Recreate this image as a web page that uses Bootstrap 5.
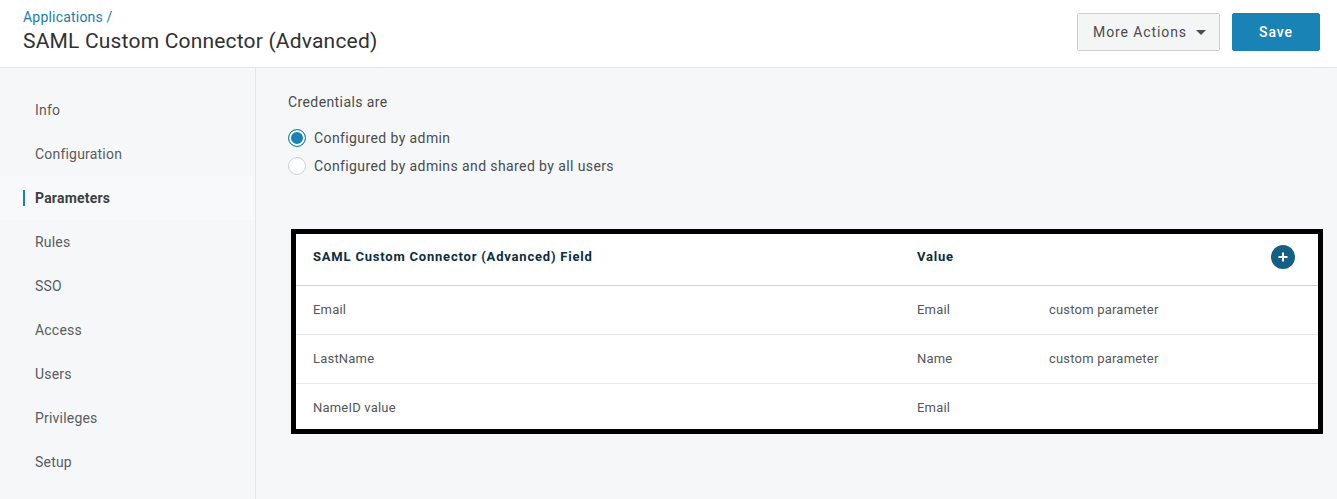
<!DOCTYPE html>
<html lang="en">
<head>
<meta charset="utf-8">
<title>SAML Custom Connector (Advanced)</title>
<link rel="stylesheet" href="https://cdn.jsdelivr.net/npm/bootstrap@5.3.0/dist/css/bootstrap.min.css">
<style>
html,body{height:499px;overflow:hidden}
body{background:#f5f7f9;font-family:Roboto,"Liberation Sans",sans-serif;color:#4a4c4e;font-size:14px;letter-spacing:.4px}
.top-head{height:68px;background:#fff;border-bottom:1px solid #e4e7ea;padding:0 17px 0 23px}
.crumb{font-size:14px;line-height:18px;color:#1a7ea8;text-decoration:none;display:block;padding-top:8px;letter-spacing:.2px}
.page-name{font-size:21px;line-height:30px;font-weight:400;color:#2f3133;margin:0;letter-spacing:.19px}
.act-bar{padding-top:13px}
.act-more{width:143px;height:38px;background:#f4f5f5;border:1px solid #ccc;border-radius:2px;color:#4a4c4e;font-size:14px;letter-spacing:.9px;padding:0 0 0 2px}
.act-save{width:88px;height:38px;background:#1a83b5;border:1px solid #1a83b5;border-radius:2px;color:#fff;font-size:14px;font-weight:500;letter-spacing:.9px;padding:0}
.act-more::after{margin-left:9px;vertical-align:2px;border-top-width:5px;border-right-width:5px;border-left-width:5px}
.shell{height:431px}
.side-rail{width:256px;flex:none;border-right:1px solid #e4e7ea;padding-top:20px}
.side-link{display:block;height:44px;line-height:44px;padding-left:35px;color:#5a5c5e;text-decoration:none;letter-spacing:.2px;position:relative}
.side-link.on{background:#f8f9fb;font-weight:700;color:#3e4042}
.side-link.on::before{content:"";position:absolute;left:23px;top:14px;width:2px;height:16px;background:#1a83b5}
.work-area{padding:24px 14px 0 32px}
.cred-label{line-height:20px;margin:0 0 12px;color:#4a4c4e}
.choice{height:28px;gap:8px;color:#4a4c4e}
.dot{width:18px;height:18px;border-radius:50%;background:#fff;border:1px solid #cfd1d3;flex:none;margin:0;appearance:none;display:block}
.dot:checked{border:1px solid #1a83b5;box-shadow:inset 0 0 0 2px #fff;background:#1a83b5}
.field-box{margin:49px 0 0 3px;width:1032px;border:5px solid #000;background:#fff}
.param-table{margin:0;table-layout:fixed;font-size:13px;color:#55575a;letter-spacing:.2px}
.param-table th{height:51px;font-size:13px;font-weight:700;color:#0c2d3f;vertical-align:middle;letter-spacing:.8px;border-bottom:1px solid #cfd1d3;padding:0 0 6px 17px;background:transparent}
.param-table td{height:49px;vertical-align:middle;padding:0 0 0 17px;border-bottom:1px solid #e4e6e8;color:#55575a;background:transparent}
.param-table tr:last-child td{border-bottom:0;height:46px;padding-top:2px}
.col-a{width:604px}.col-b{width:132px}
.add-round{width:24px;height:24px;border-radius:50%;background:#135f86;border:0;padding:0;margin:2px 0 0 222px}
</style>
</head>
<body>
<header class="top-head d-flex justify-content-between align-items-start">
  <div>
    <a class="crumb" href="#">Applications /</a>
    <h1 class="page-name">SAML Custom Connector (Advanced)</h1>
  </div>
  <div class="act-bar d-flex gap-2">
    <div class="dropdown">
      <button class="btn act-more dropdown-toggle" type="button">More Actions</button>
    </div>
    <button class="btn act-save ms-1" type="button">Save</button>
  </div>
</header>
<div class="shell d-flex">
  <nav class="side-rail">
    <a class="side-link" href="#">Info</a>
    <a class="side-link" href="#">Configuration</a>
    <a class="side-link on" href="#">Parameters</a>
    <a class="side-link" href="#">Rules</a>
    <a class="side-link" href="#">SSO</a>
    <a class="side-link" href="#">Access</a>
    <a class="side-link" href="#">Users</a>
    <a class="side-link" href="#">Privileges</a>
    <a class="side-link" href="#">Setup</a>
  </nav>
  <main class="work-area flex-grow-1">
    <p class="cred-label">Credentials are</p>
    <label class="choice d-flex align-items-center"><input class="dot" type="radio" name="cred" checked>Configured by admin</label>
    <label class="choice d-flex align-items-center"><input class="dot" type="radio" name="cred">Configured by admins and shared by all users</label>
    <div class="field-box">
      <table class="table param-table">
        <thead>
          <tr>
            <th class="col-a">SAML Custom Connector (Advanced) Field</th>
            <th class="col-b">Value</th>
            <th><button class="add-round d-flex align-items-center justify-content-center" type="button" aria-label="Add"><svg width="12" height="12" viewBox="0 0 12 12"><path d="M6 1.5v9M1.5 6h9" stroke="#fff" stroke-width="2"/></svg></button></th>
          </tr>
        </thead>
        <tbody>
          <tr><td>Email</td><td>Email</td><td>custom parameter</td></tr>
          <tr><td>LastName</td><td>Name</td><td>custom parameter</td></tr>
          <tr><td>NameID value</td><td>Email</td><td></td></tr>
        </tbody>
      </table>
    </div>
  </main>
</div>
<script src="https://cdn.jsdelivr.net/npm/bootstrap@5.3.0/dist/js/bootstrap.bundle.min.js"></script>
</body>
</html>
